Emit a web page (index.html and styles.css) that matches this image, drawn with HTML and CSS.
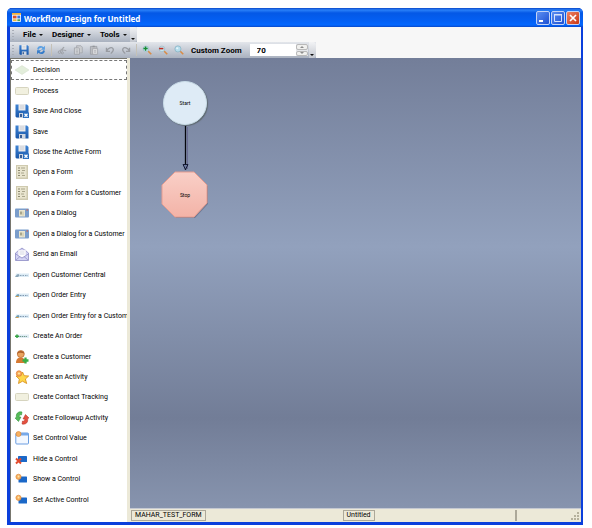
FILE: index.html
```
<!DOCTYPE html>
<html lang="en">
<head>
    <meta charset="UTF-8">
    <title>Workflow Design for Untitled</title>
    <link rel="stylesheet" href="styles.css">
</head>
<body>
    <!-- shared icons -->
    <svg class="sprite" aria-hidden="true">
        <defs>
            <linearGradient id="floppyBlue" x1="0" y1="0" x2="0" y2="1">
                <stop offset="0" stop-color="#3f84d4"/>
                <stop offset="1" stop-color="#1a57a8"/>
            </linearGradient>
        </defs>
        <symbol id="i-decision" viewBox="0 0 14 14">
            <path d="M7 2.500 14 7 7 11.500 0 7Z" fill="#e3eedb" stroke="#d3dccb" stroke-width=".5"/>
        </symbol>
        <symbol id="i-process" viewBox="0 0 14 14">
            <rect x=".5" y="3.500" width="13" height="7" rx="1" fill="#f1f0df" stroke="#d6d4bf"/>
        </symbol>
        <symbol id="i-save" viewBox="0 0 14 14">
            <path d="M.5.5h11.500l1.500 1.500v11.500h-12l-1-1Z" fill="url(#floppyBlue)"/>
            <path d="M3.500 0h7v6.500h-7Z" fill="#e9eaec"/>
            <path d="M5 2h4M5 4h4" stroke="#c3c8d0" stroke-width=".8"/>
            <path d="M4 9h6.500v5H4Z" fill="#cfd6e0"/>
            <path d="M5 10h2v3H5Z" fill="#3a5f96"/>
        </symbol>
        <symbol id="i-saveclose" viewBox="0 0 14 14">
            <use href="#i-save"/>
            <rect x="8" y="8.500" width="6" height="5.500" fill="#2a6fc0"/>
            <path d="m9.500 9.800 3 3m0-3-3 3" stroke="#fff" stroke-width="1.300"/>
        </symbol>
        <symbol id="i-form" viewBox="0 0 14 14">
            <path d="M1 0h12v14H1Z" fill="#cfcaaf"/>
            <path d="M2 1h9.500v11.500H2Z" fill="#e9e5cf"/>
            <path d="M3 3h2M3 5.500h2M3 8h2M3 10.500h2" stroke="#8d8970"/>
            <path d="M6 3h4M7 5.500h3M6 8h3M7 10.500h3" stroke="#aaa68c"/>
        </symbol>
        <symbol id="i-dialog" viewBox="0 0 14 14">
            <rect y="2.500" width="14" height="9" rx="1" fill="#7a9dcb"/>
            <path d="M4 4h6v6.500H4Z" fill="#e8e5cf"/>
            <path d="M5 5.500h2v3H5Z" fill="#a7a58c"/>
            <path d="M8 5.500v4" stroke="#c6c2a5"/>
            <path d="M11.500 3.500h1.500v1h-1.500Z" fill="#e0583c"/>
        </symbol>
        <symbol id="i-mail" viewBox="0 0 14 14">
            <path d="M.5 6 7 1l6.500 5v7.500H.5Z" fill="#d3d3f4" stroke="#8b8ac4" stroke-width=".8"/>
            <path d="M3 3h8v6l-4 2-4-2Z" fill="#fff" stroke="#bdbbdc" stroke-width=".5"/>
            <path d="M4.500 5h5M4.500 7h5" stroke="#b5b8d2" stroke-width=".6"/>
            <path d="m.7 7 6.300 4 6.300-4M1 13l4-3.500M13 13 9 9.500" fill="none" stroke="#8b8ac4" stroke-width=".7"/>
        </symbol>
        <symbol id="i-central" viewBox="0 0 14 14">
            <path d="M1 5.500h13v3.500H0Z" fill="#dcebf5"/>
            <path d="m0 9 2-2.500 1.500-.5 1 1.500L3 9" fill="#8aa5b8"/>
            <path d="M5 7.500h8" stroke="#8ba3b6" stroke-dasharray="1.500 1"/>
        </symbol>
        <symbol id="i-order" viewBox="0 0 14 14">
            <path d="M1 5.500h13v3.500H0Z" fill="#dcebf5"/>
            <path d="m0 9 2-2.500 1.500-.5 1 1.500L3 9" fill="#6d9cb4"/>
            <path d="M1 8.500h2.500" stroke="#d69d4c"/>
            <path d="M5 7.500h8" stroke="#8099b0" stroke-dasharray="1.500 1"/>
        </symbol>
        <symbol id="i-neworder" viewBox="0 0 14 14">
            <path d="M1 5.500h13v3.500H1Z" fill="#e0edf4"/>
            <path d="M0 7.300h4M2 5.500V9" stroke="#35a344" stroke-width="1.500"/>
            <path d="M4.500 7.500H12" stroke="#71998d" stroke-dasharray="1.500 .7"/>
        </symbol>
        <symbol id="i-customer" viewBox="0 0 14 14">
            <path d="M1 13c0-4 2-5.500 4.500-5.500S10.500 9 10.500 13Z" fill="#d67a32"/>
            <circle cx="5.800" cy="4" r="3.500" fill="#eba560" stroke="#b8652b" stroke-width=".7"/>
            <path d="M2.300 4C2 0 9 0 9.300 3.500 7 3 4 2 2.300 4Z" fill="#ad5f28"/>
            <path d="M10.500 7.500v6M7.500 10.500h6" stroke="#38ad46" stroke-width="2.300"/>
        </symbol>
        <symbol id="i-activity" viewBox="0 0 14 14">
            <path d="m7.500 2 1.700 3.700 4.500.3-3.300 3 1.300 4.500-4.200-2.300L3.500 13.500l.8-4.300L1 6l4.700-.3Z" fill="#fed64b" stroke="#d58a17" stroke-width=".8"/>
            <circle cx="4" cy="3.500" r="2.700" fill="#f7ad58" stroke="#e57c3a" stroke-width=".8"/>
            <circle cx="4" cy="3.500" r="1" fill="#ffe9a3"/>
        </symbol>
        <symbol id="i-followup" viewBox="0 0 14 14">
            <path d="M7 1C3 0 .5 3 1.500 6.500L0 7l3.500 3.500L6 6H4.200C4 4.500 5 3.500 6.500 4Z" fill="#55bb58" stroke="#2c8a36" stroke-width=".5"/>
            <path d="M7 13c4 1 6.500-2 5.500-5.500L14 7l-3.500-3.500L8 8h1.800C10 9.500 9 10.500 7.500 10Z" fill="#e5503f" stroke="#ad2c20" stroke-width=".5"/>
        </symbol>
        <symbol id="i-value" viewBox="0 0 14 14">
            <rect x=".8" y="2" width="12.700" height="11" rx="1" fill="#f3f8ff" stroke="#6a9de0"/>
            <path d="M1 2h12.500v2.500H1Z" fill="#77a9e9"/>
            <circle cx="3.500" cy="3" r="2.500" fill="#f6b060" stroke="#e08b3b" stroke-width=".7"/>
        </symbol>
        <symbol id="i-hide" viewBox="0 0 14 14">
            <rect x="3" y="4" width="9" height="6" rx=".6" fill="#1b68c8"/>
            <path d="m1 6.500 5 5m0-5-5 5" stroke="#e34a2c" stroke-width="2"/>
        </symbol>
        <symbol id="i-show" viewBox="0 0 14 14">
            <rect x="3.500" y="4.500" width="8.500" height="6" rx=".6" fill="#1b68c8"/>
            <circle cx="3.500" cy="4.800" r="2.600" fill="#f6b060" stroke="#e08b3b" stroke-width=".7"/>
            <circle cx="3.500" cy="4.500" r=".9" fill="#ffe6a8"/>
        </symbol>
        <symbol id="i-refresh" viewBox="0 0 14 14">
            <path d="M1.500 6c.5-5 6-6 9-3L12.500 1v5.500H7l2-2C7 3 4.500 4 4 6.500Z" fill="#5a9fe2"/>
            <path d="M12.500 8c-.5 5-6 6-9 3L1.500 13V7.500H7l-2 2C7 11 9.500 10 10 7.500Z" fill="#357cca"/>
        </symbol>
        <symbol id="i-cut" viewBox="0 0 14 14">
            <path d="m4 9 6-6M5 6l8 2M7 9l2-6" stroke="#a2a5aa" stroke-width="1.500"/>
            <circle cx="3.500" cy="10" r="1.800" fill="none" stroke="#989ba1" stroke-width="1.200"/>
            <circle cx="7.500" cy="11" r="1.500" fill="none" stroke="#989ba1" stroke-width="1.200"/>
        </symbol>
        <symbol id="i-copy" viewBox="0 0 14 14">
            <path d="M5 1h6l2 2v8H5Z" fill="#c9cbce" stroke="#9fa2a7"/>
            <path d="M2 4h6l1 1v8H2Z" fill="#d2d4d7" stroke="#999ca2"/>
            <path d="M4 7h3M4 9h3M4 11h3" stroke="#9fa2a7" stroke-width=".8"/>
        </symbol>
        <symbol id="i-paste" viewBox="0 0 14 14">
            <path d="M2 2h9v11H2Z" fill="#bbbdc1" stroke="#989ba0"/>
            <path d="M5 1h3v2H5Z" fill="#92959a"/>
            <path d="M5 5h7v8H5Z" fill="#dbdcde" stroke="#a2a4a9"/>
            <path d="M7 8h3M7 10h3" stroke="#999ca1" stroke-width=".8"/>
        </symbol>
        <symbol id="i-undo" viewBox="0 0 14 14">
            <path d="M2 4v5h5M2.500 8C4 4 10 2 11.500 5.500 12.500 8 10 10 8 12" fill="none" stroke="#989ba1" stroke-width="1.800"/>
        </symbol>
        <symbol id="i-zoomin" viewBox="0 0 14 14">
            <path d="m8 8 5 5" stroke="#d98b45" stroke-width="2.200"/>
            <circle cx="5.500" cy="5.500" r="4" fill="#c7e4ee" stroke="#9db8c4"/>
            <path d="M5 2v6M2 5h6" stroke="#168c32" stroke-width="2"/>
        </symbol>
        <symbol id="i-zoomout" viewBox="0 0 14 14">
            <path d="m8 8 5 5" stroke="#d98b45" stroke-width="2.200"/>
            <circle cx="5.500" cy="5.500" r="4" fill="#c7e4ee" stroke="#9db8c4"/>
            <path d="M1.500 5h6" stroke="#c02d20" stroke-width="2.200"/>
        </symbol>
        <symbol id="i-zoom" viewBox="0 0 14 14">
            <path d="m8 8 5 5" stroke="#d98b45" stroke-width="2.200"/>
            <circle cx="5.500" cy="5.500" r="4.300" fill="#b6ddec" stroke="#85aec1"/>
            <circle cx="4.500" cy="4.500" r="1.500" fill="#e5f5fb"/>
        </symbol>
    </svg>

    <div class="window">
        <header class="titlebar">
            <svg class="app-icon" viewBox="0 0 10 10" aria-hidden="true">
                <rect width="10" height="10" rx="1" fill="#e8eefb"/>
                <path d="M0 0h10v2H0Z" fill="#f0b13c"/>
                <path d="M1 3h4v3H1Z" fill="#d9502b"/>
                <path d="M6 3h3v3H6Z" fill="#3b74dc"/>
                <path d="M1 7h4v2H1Z" fill="#edb93a"/>
                <path d="M6 7h3v2H6Z" fill="#55a04c"/>
            </svg>
            <h1 class="title">Workflow Design for Untitled</h1>
            <div class="caption-buttons">
                <button class="caption-btn" aria-label="Minimize">
                    <svg viewBox="0 0 12 12"><path d="M2 8h4v2H2Z" fill="#fff"/></svg>
                </button>
                <button class="caption-btn" aria-label="Maximize">
                    <svg viewBox="0 0 12 12"><path d="M2.500 3h7v6.500h-7Z" fill="none" stroke="#d5e2fb"/><path d="M2 2.500h8" stroke="#d5e2fb"/></svg>
                </button>
                <button class="caption-btn close" aria-label="Close">
                    <svg viewBox="0 0 12 12"><path d="m3 3 6 6m0-6L3 9" stroke="#fff" stroke-width="1.700"/></svg>
                </button>
            </div>
        </header>

        <div class="bars">
            <nav class="strip menu">
                <span class="grip"></span>
                <button class="menu-btn">File</button>
                <button class="menu-btn">Designer</button>
                <button class="menu-btn">Tools</button>
                <button class="overflow" aria-label="More menus"></button>
            </nav>
            <div class="strip toolbar">
                <span class="grip"></span>
                <button class="tool wide" aria-label="Save"><svg><use href="#i-save"/></svg></button>
                <button class="tool wide" aria-label="Refresh"><svg><use href="#i-refresh"/></svg></button>
                <span class="sep"></span>
                <button class="tool" aria-label="Cut"><svg><use href="#i-cut"/></svg></button>
                <button class="tool" aria-label="Copy"><svg><use href="#i-copy"/></svg></button>
                <button class="tool" aria-label="Paste"><svg><use href="#i-paste"/></svg></button>
                <button class="tool" aria-label="Undo"><svg><use href="#i-undo"/></svg></button>
                <button class="tool redo" aria-label="Redo"><svg><use href="#i-undo"/></svg></button>
                <span class="sep"></span>
                <button class="tool" aria-label="Zoom in"><svg><use href="#i-zoomin"/></svg></button>
                <button class="tool" aria-label="Zoom out"><svg><use href="#i-zoomout"/></svg></button>
                <button class="tool" aria-label="Zoom"><svg><use href="#i-zoom"/></svg></button>
                <label class="zoom-label" for="zoom">Custom Zoom</label>
                <div class="spinner">
                    <input id="zoom" type="text" inputmode="numeric" value="70">
                    <div class="spin-buttons">
                        <button class="up" aria-label="Increase zoom"></button>
                        <button class="down" aria-label="Decrease zoom"></button>
                    </div>
                </div>
                <button class="overflow" aria-label="More tools"></button>
            </div>
        </div>

        <div class="workspace">
            <aside class="palette">
                <ul>
                    <li><button class="item current"><svg><use href="#i-decision"/></svg>Decision</button></li>
                    <li><button class="item"><svg><use href="#i-process"/></svg>Process</button></li>
                    <li><button class="item"><svg><use href="#i-saveclose"/></svg>Save And Close</button></li>
                    <li><button class="item"><svg><use href="#i-save"/></svg>Save</button></li>
                    <li><button class="item"><svg><use href="#i-saveclose"/></svg>Close the Active Form</button></li>
                    <li><button class="item"><svg><use href="#i-form"/></svg>Open a Form</button></li>
                    <li><button class="item"><svg><use href="#i-form"/></svg>Open a Form for a Customer</button></li>
                    <li><button class="item"><svg><use href="#i-dialog"/></svg>Open a Dialog</button></li>
                    <li><button class="item"><svg><use href="#i-dialog"/></svg>Open a Dialog for a Customer</button></li>
                    <li><button class="item"><svg><use href="#i-mail"/></svg>Send an Email</button></li>
                    <li><button class="item"><svg><use href="#i-central"/></svg>Open Customer Central</button></li>
                    <li><button class="item"><svg><use href="#i-order"/></svg>Open Order Entry</button></li>
                    <li><button class="item"><svg><use href="#i-order"/></svg>Open Order Entry for a Custom</button></li>
                    <li><button class="item"><svg><use href="#i-neworder"/></svg>Create An Order</button></li>
                    <li><button class="item"><svg><use href="#i-customer"/></svg>Create a Customer</button></li>
                    <li><button class="item"><svg><use href="#i-activity"/></svg>Create an Activity</button></li>
                    <li><button class="item"><svg><use href="#i-process"/></svg>Create Contact Tracking</button></li>
                    <li><button class="item"><svg><use href="#i-followup"/></svg>Create Followup Activity</button></li>
                    <li><button class="item"><svg><use href="#i-value"/></svg>Set Control Value</button></li>
                    <li><button class="item"><svg><use href="#i-hide"/></svg>Hide a Control</button></li>
                    <li><button class="item"><svg><use href="#i-show"/></svg>Show a Control</button></li>
                    <li><button class="item"><svg><use href="#i-show"/></svg>Set Active Control</button></li>
                </ul>
            </aside>

            <div class="designer">
                <main class="canvas">
                    <div class="node start">Start</div>
                    <svg class="arrow" viewBox="0 0 10 46" aria-hidden="true">
                        <path d="M7.500 2v42" stroke="#6a6c94"/>
                        <path d="M5.500 1v44" stroke="#05060d" stroke-width="1.300"/>
                        <path d="m3 39.500 2.500 5 2.500-5Z" fill="#6f7ca0" stroke="#141a34"/>
                    </svg>
                    <div class="node stop">
                        <svg viewBox="0 0 48 48" aria-hidden="true">
                            <defs>
                                <linearGradient id="stopFill" x1="0" y1="0" x2="0" y2="1">
                                    <stop offset="0" stop-color="#f9cfc7"/>
                                    <stop offset="1" stop-color="#f3b3a7"/>
                                </linearGradient>
                            </defs>
                            <path d="M15 2h19l13 13v18L34 47H15L2 34V15Z" fill="#55596f" opacity=".5"/>
                            <path d="M14 1h19l13 13v18L33 46H14L1 33V14Z" fill="url(#stopFill)" stroke="#e69c90"/>
                        </svg>
                        <span>Stop</span>
                    </div>
                </main>
                <footer class="status">
                    <div><span class="panel">MAHAR_TEST_FORM</span></div>
                    <div><span class="panel">Untitled</span></div>
                    <span class="divider"></span>
                    <svg class="resize" viewBox="0 0 8 8" aria-hidden="true">
                        <path d="M6 0h2v2H6ZM3 3h2v2H3ZM6 3h2v2H6ZM0 6h2v2H0ZM3 6h2v2H3ZM6 6h2v2H6Z" fill="#b5b19d"/>
                    </svg>
                </footer>
            </div>
        </div>
    </div>
</body>
</html>
```
FILE: styles.css
```
* {
    box-sizing: border-box;
}

body {
    margin: 0;
    padding: 8px 9px 3px 7px;
    height: 100vh;
    background: #fff;
    font-family: Roboto, Arial, sans-serif;
    font-size: 7px;
    color: #000;
}

button {
    margin: 0;
    padding: 0;
    border: none;
    background: none;
    font: inherit;
    color: inherit;
}

.sprite {
    position: absolute;
    width: 0;
    height: 0;
}

.window {
    display: flex;
    flex-direction: column;
    height: 100%;
    border: 3px solid #0a3fdc;
    border-top: none;
    border-right-width: 2px;
    border-radius: 5px 5px 0 0;
    background: #0a3fdc;
}

/* title bar */
.titlebar {
    display: flex;
    align-items: center;
    height: 19px;
    margin: 0 -2px 0 -3px;
    padding: 0 3px 0 5px;
    border-radius: 5px 5px 0 0;
    background: linear-gradient(#0a48c8 0, #2a80f8 2px, #0458e6 5px, #0460f4 13px, #0468ff 17px, #0a48c8 19px);
}

.app-icon {
    width: 9px;
    height: 9px;
    margin-right: 3px;
}

.title {
    flex: 1;
    margin: 0;
    padding-top: 2px;
    font-family: "Noto Sans", sans-serif;
    font-size: 8px;
    font-weight: bold;
    line-height: 12px;
    color: #fff;
}

.caption-buttons {
    display: flex;
    gap: 1px;
    padding-top: 1px;
}

.caption-btn {
    width: 14px;
    height: 14px;
    border: 1px solid #c3d3f6;
    border-radius: 2px;
    background: linear-gradient(135deg, #5c8ff2, #1c4fd2);
}

.caption-btn.close {
    background: linear-gradient(135deg, #ec8468, #cb3610);
}

.caption-btn svg {
    display: block;
    width: 12px;
    height: 12px;
}

/* menu and toolbar */
.bars {
    display: flex;
    flex-direction: column;
    align-items: flex-start;
    background: #f7f7f7;
}

.strip {
    display: flex;
    align-items: center;
    height: 16px;
    padding-left: 2px;
    background: linear-gradient(#e3e6eb, #a9b1bf);
}

.grip {
    width: 2px;
    height: 10px;
    margin-right: 1px;
    background: repeating-linear-gradient(#a8adb7 0 1px, transparent 1px 3px);
}

.menu {
    height: 15px;
    font-size: 8px;
    font-weight: bold;
}

.menu-btn {
    display: flex;
    align-items: center;
    gap: 3px;
    padding: 0 1px 0 8px;
}

.menu-btn::after {
    content: "";
    border: 2px solid transparent;
    border-top-color: #111;
    border-bottom: none;
}

.overflow {
    display: flex;
    flex-direction: column;
    justify-content: flex-end;
    align-items: center;
    width: 7px;
    height: 100%;
    padding-bottom: 2px;
    border-radius: 0 3px 3px 0;
    background: linear-gradient(#f2f3f5, #c3c7cf);
}

.overflow::after {
    content: "";
    border: 2px solid transparent;
    border-top-color: #111;
    border-bottom: none;
}

.menu .overflow {
    margin-left: 2px;
}

.tool {
    width: 16px;
    height: 14px;
}

.tool.wide {
    width: 17px;
}

.tool svg {
    display: block;
    width: 10px;
    height: 10px;
    margin: 0 auto;
}

.redo svg {
    transform: scaleX(-1);
}

.sep {
    width: 1px;
    height: 12px;
    margin: 0 2px;
    background: #c5c1b6;
}

.zoom-label {
    margin: 0 8px 0 4px;
    font-size: 8px;
    font-weight: bold;
}

.spinner {
    display: flex;
    width: 58px;
    height: 12px;
    margin-right: 1px;
    background: #fff;
}

.spinner input {
    flex: 1;
    min-width: 0;
    padding: 0 0 0 7px;
    border: none;
    background: none;
    font: bold 8px Roboto, Arial, sans-serif;
}

.spin-buttons {
    display: flex;
    flex-direction: column;
    gap: 1px;
    width: 12px;
    background: #e4e6ea;
}

.spin-buttons button {
    display: flex;
    flex: 1;
    align-items: center;
    justify-content: center;
    border: 1px solid #b9b9b9;
    border-radius: 2px;
    background: #f0f0ee;
}

.spin-buttons button::after {
    content: "";
    border: 2px solid transparent;
}

.spin-buttons .up::after {
    border-top: none;
    border-bottom-color: #8d8d8d;
}

.spin-buttons .down::after {
    border-bottom: none;
    border-top-color: #8d8d8d;
}

/* activity palette */
.workspace {
    display: flex;
    flex: 1;
    min-height: 0;
    background: #ece9d8;
}

.palette {
    width: 117px;
    margin-right: 3px;
    padding: 1px 0 12px;
    border-top: 1px solid #77766e;
    border-left: 1px solid #77766e;
    background: #fff;
}

.palette ul {
    display: grid;
    grid-template-columns: minmax(0, 1fr);
    grid-auto-rows: 1fr;
    height: 100%;
    margin: 0;
    padding: 0;
    list-style: none;
}

.item {
    display: flex;
    align-items: center;
    gap: 4px;
    width: 100%;
    height: 100%;
    padding-left: 4px;
    overflow: hidden;
    text-align: left;
    white-space: nowrap;
}

.item.current {
    padding-left: 3px;
    border: 1px dashed #777;
}

.item svg {
    flex: none;
    width: 14px;
    height: 14px;
}

/* designer surface */
.designer {
    display: flex;
    flex: 1;
    flex-direction: column;
    min-width: 0;
}

.canvas {
    display: flex;
    flex: 1;
    flex-direction: column;
    align-items: flex-start;
    padding: 23px 0 0 31px;
    background: linear-gradient(#737e99 0, #92a1bd 42%, #727d97 80%, #8794ae 100%);
}

.node {
    display: flex;
    align-items: center;
    justify-content: center;
    width: 48px;
    font-size: 5px;
}

.start {
    width: 44px;
    height: 44px;
    margin-left: 2px;
    border: 1px solid #c9dce8;
    border-radius: 50%;
    background: #deebf6;
    box-shadow: 1px 1px 1px #5f6a72;
}

.arrow {
    width: 10px;
    height: 46px;
    margin-left: 19px;
}

.stop {
    position: relative;
    height: 48px;
}

.stop svg {
    position: absolute;
    inset: 0;
}

.stop span {
    position: relative;
}

/* status bar */
.status {
    display: grid;
    grid-template-columns: 212fr 173fr 56fr 8px;
    align-items: center;
    height: 14px;
    padding: 0 2px 0 1px;
    border-top: 1px solid #c5c9d2;
    background: #ece9d8;
}

.panel {
    display: inline-block;
    padding: 0 3px;
    border: 1px solid #aca899;
    line-height: 9px;
    vertical-align: top;
}

.divider {
    width: 2px;
    height: 11px;
    background: #aca899;
}

.resize {
    align-self: end;
    width: 8px;
    height: 8px;
    margin-bottom: 2px;
}
```
